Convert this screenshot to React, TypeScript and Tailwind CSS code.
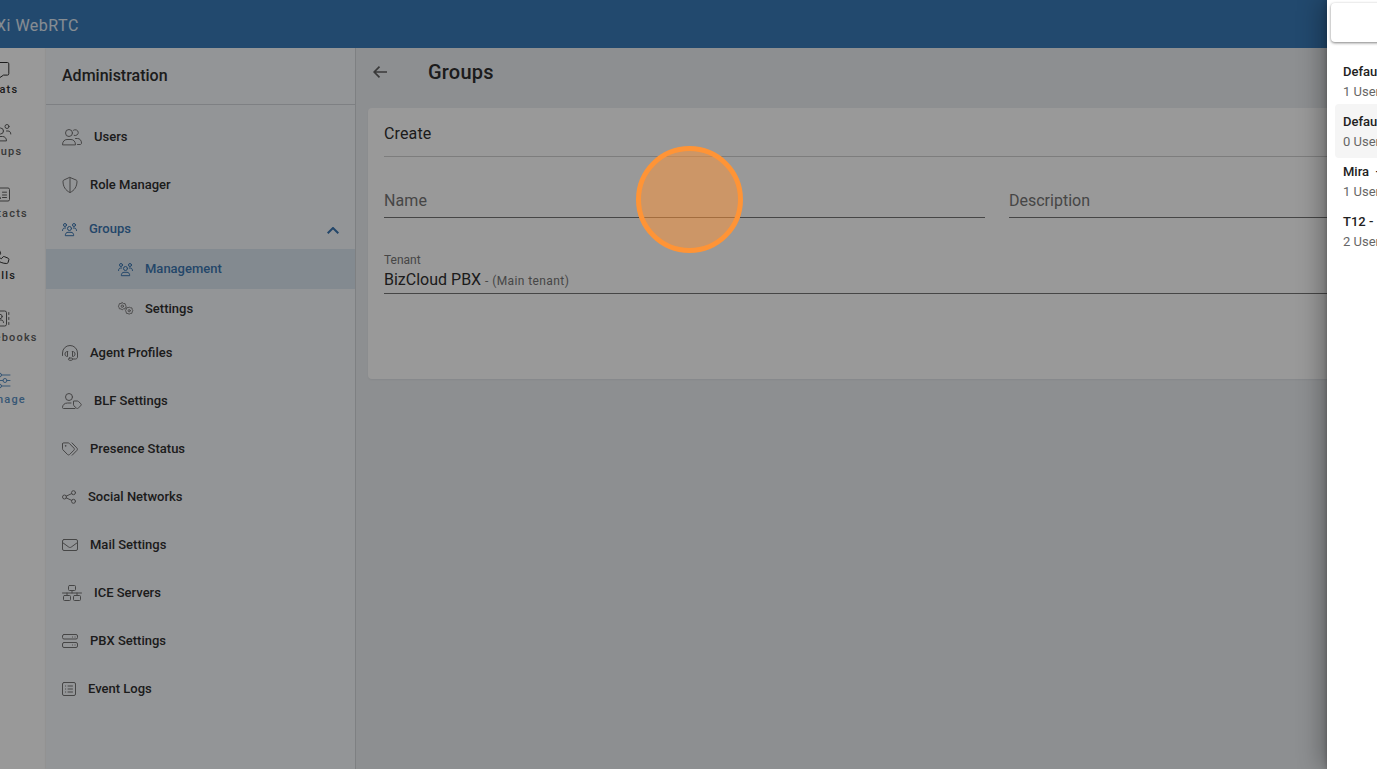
import { ReactNode } from 'react';
import clsx from 'clsx';

type IconProps = { w: number; h: number; children: ReactNode };

function Icon({ w, h, children }: IconProps) {
  return (
    <svg
      width={w}
      height={h}
      viewBox={`0 0 ${w} ${h}`}
      fill="none"
      stroke="currentColor"
      strokeWidth="1"
      strokeLinecap="round"
      strokeLinejoin="round"
      className="shrink-0 overflow-visible"
    >
      {children}
    </svg>
  );
}

const UsersIcon = () => (
  <Icon w={20} h={16}>
    <circle cx="7" cy="4" r="3.5" />
    <path d="M.5 15.5c0-3 2-5 4.500-5h4c2.500 0 4.500 2 4.500 5z" />
    <path d="M11.500 1.200a3 3 0 1 1 .6 5.200M13.500 9.500h2c2.200 0 4 1.800 4 4.500 0 .9-.5 1.500-1.300 1.500h-2.700" />
  </Icon>
);

const ShieldIcon = () => (
  <Icon w={16} h={16}>
    <path d="M8 .5l6.300 2.600c.4.2.7.6.7 1C15 9.500 12.500 13.500 8 15.500 3.500 13.500 1 9.500 1 4.100c0-.4.3-.8.7-1zM8 .5v15" />
  </Icon>
);

const GroupIcon = () => (
  <Icon w={15} h={13}>
    <circle cx="3" cy="2" r="1.500" />
    <circle cx="12" cy="2" r="1.500" />
    <circle cx="7.500" cy="5.500" r="2" />
    <path d="M.5 7.500c0-1.500.9-2.500 2.300-2.500h.9M14.500 7.500c0-1.500-.9-2.500-2.300-2.500h-.9" />
    <path d="M3.300 12.300c0-1.800 1-3 2.700-3h3c1.700 0 2.700 1.200 2.700 3z" />
  </Icon>
);

const GearsIcon = () => (
  <Icon w={15} h={13}>
    <g strokeWidth=".9">
      <path d="M4.200.6l1.200.9 1.700.1.400 1.500.7 1.100-.7 1.200-.4 1.400-1.700.1-1.200.9-1.200-.9-1.600-.1-.4-1.400L.4 4.200l.6-1.100.4-1.500 1.600-.1z" />
      <circle cx="4.300" cy="4.200" r="1.200" />
      <path d="M8.800 5.700l1.300-.1 1.200-.4 1.100.5 1.500.2.300 1.400.6 1.400-.6 1.200-.4 1.500-1.500.1-1.200.7-1.100-.7-1.500-.1-.4-1.500-.6-1.200.7-1.400z" />
      <circle cx="11.200" cy="8.700" r="1.100" />
    </g>
  </Icon>
);

const HeadsetIcon = () => (
  <Icon w={16} h={16}>
    <path d="M.5 10.500V8a7.500 7.500 0 0 1 15 0v4c0 1.100-.9 2-2 2h-3" />
    <path d="M5.500 6.500v5c-1.700 0-2.500-1-2.500-2.500s.8-2.500 2.500-2.500zM10.500 6.500v5c1.700 0 2.500-1 2.500-2.500s-.8-2.500-2.500-2.500z" />
    <rect x="6.500" y="13" width="4" height="2.300" rx="1.100" />
  </Icon>
);

const UserTagIcon = () => (
  <Icon w={20} h={16}>
    <circle cx="7" cy="4" r="3.500" />
    <path d="M9 10H5.500c-3 0-5 2-5 4.500 0 .6.400 1 1 1h11.500" />
    <path d="M11.500 8.500v3.300c0 .4.200.7.400 1l2.400 2.200c.6.600 1.400.6 2 0l2.500-2.300c.6-.6.6-1.400 0-2l-2.400-2.300c-.3-.3-.6-.4-1-.4h-3.400z" />
  </Icon>
);

const TagsIcon = () => (
  <Icon w={16} h={14}>
    <path d="M.5 2v4.800c0 .4.200.8.400 1l4.600 4.700c.6.600 1.500.6 2.100 0l4.300-4.300c.6-.6.6-1.500 0-2.100L7.300 1.400c-.3-.3-.7-.5-1.100-.5H1.500c-.6 0-1 .5-1 1.100z" />
    <path d="M10 .9l4.800 5c.8.800.8 1.800 0 2.600l-4.600 4.700" />
    <circle cx="3.500" cy="3.900" r=".3" />
  </Icon>
);

const ShareIcon = () => (
  <Icon w={14} h={14}>
    <circle cx="2.500" cy="7" r="2" />
    <circle cx="11.500" cy="2.700" r="2" />
    <circle cx="11.500" cy="11.300" r="2" />
    <path d="M4.300 6.100l5.400-2.500M4.300 7.900l5.400 2.500" />
  </Icon>
);

const MailIcon = () => (
  <Icon w={16} h={12}>
    <rect x=".5" y=".5" width="15" height="11" rx="1.500" />
    <path d="M.5 3.500l6.300 4.600c.7.500 1.700.5 2.400 0l6.300-4.600" />
  </Icon>
);

const NetworkIcon = () => (
  <Icon w={20} h={16}>
    <rect x="6.500" y=".5" width="7" height="5" rx="1" />
    <rect x="1.500" y="10.500" width="7" height="5" rx="1" />
    <rect x="11.500" y="10.500" width="7" height="5" rx="1" />
    <path d="M.5 8h19M10 5.500V8M5 8v2.500M15 8v2.500" />
  </Icon>
);

const ServerIcon = () => (
  <Icon w={16} h={14}>
    <rect x=".5" y=".5" width="15" height="4.500" rx="1.500" />
    <rect x=".5" y="8.500" width="15" height="5" rx="1.500" />
    <path d="M10.500 3h.1M13 3h.1M10.500 11h.1M13 11h.1" />
  </Icon>
);

const LogsIcon = () => (
  <Icon w={14} h={14}>
    <rect x=".5" y=".5" width="13" height="13" rx="1.500" />
    <path d="M3.500 4h.2M3.500 7h.2M3.500 10h.2M6 4h4.500M6 7h4.500M6 10h4.500" />
  </Icon>
);

const railItems = [
  {
    label: 'Chats',
    strong: true,
    icon: (
      <Icon w={20} h={20}>
        <path d="M2.500 2.500h15c.8 0 1.300.5 1.300 1.300v10c0 .8-.5 1.300-1.300 1.300h-4l-5 3.400v-3.400h-6c-.8 0-1.300-.5-1.300-1.300v-10c0-.8.5-1.300 1.300-1.300z" />
      </Icon>
    ),
  },
  {
    label: 'Groups',
    icon: (
      <Icon w={20} h={20}>
        <circle cx="17" cy="4.500" r="2" />
        <circle cx="3" cy="4.500" r="2" />
        <circle cx="10.500" cy="9" r="3" />
        <path d="M16.500 9h1.500c1.700 0 2.800 1.100 2.800 3M3.500 9H2C.3 9-.8 10.100-.8 12M4.500 18.500c0-2.500 1.500-4 3.500-4h4.500c2.200 0 4 1.500 4 4z" />
      </Icon>
    ),
  },
  {
    label: 'Contacts',
    icon: (
      <Icon w={20} h={20}>
        <rect x=".5" y="4" width="19" height="13" rx="1.500" />
        <path d="M12.500 8.200h4M12.500 11h4M12.500 13.500h4M3 14.500c0-1.500 1-2.500 2.500-2.500h2.500c1.500 0 2.500 1 2.500 2.500" />
        <circle cx="6.700" cy="8.500" r="2" />
      </Icon>
    ),
  },
  {
    label: 'Calls',
    strong: true,
    icon: (
      <Icon w={20} h={20}>
        <path d="M9 3l1.500 4c.2.500.1 1-.3 1.300L8.500 10c.9 1.500 1.600 2.200 2.800 2.800l1.700-1.900c.4-.4.8-.5 1.300-.3l3.800 1.600c.6.300.9.800.8 1.400l-.8 2.800c-.2.700-.7 1.100-1.400 1.100C9 17.500 2 11.500 1.500 4c0-.7.400-1.200 1.100-1.400l4.900-.5c.7-.1 1.200.2 1.500.9z" />
      </Icon>
    ),
  },
  {
    label: 'Phonebooks',
    icon: (
      <Icon w={20} h={20}>
        <rect x="2" y="3" width="14.500" height="15" rx="1.800" />
        <circle cx="10" cy="8.500" r="2.200" />
        <path d="M6 14.500c0-1.700 1-2.500 2.500-2.500h2.500c1.500 0 2.500.8 2.500 2.500M18.800 4.500v2M18.800 9.500v2M18.800 14.500v2" />
      </Icon>
    ),
  },
  {
    label: 'Manage',
    active: true,
    icon: (
      <Icon w={20} h={20}>
        <path d="M0 5h7.500M11.500 5h8.500M0 10.500h13M17 10.500h3M0 16h7.500M11.500 16H20" />
        <circle cx="9.500" cy="5" r="2" />
        <circle cx="15" cy="10.500" r="2" />
        <circle cx="9.500" cy="16" r="2" />
      </Icon>
    ),
  },
];

const topItems = [
  { label: 'Users', icon: <UsersIcon /> },
  { label: 'Role Manager', icon: <ShieldIcon /> },
];

const bottomItems = [
  { label: 'Agent Profiles', icon: <HeadsetIcon /> },
  { label: 'BLF Settings', icon: <UserTagIcon /> },
  { label: 'Presence Status', icon: <TagsIcon /> },
  { label: 'Social Networks', icon: <ShareIcon /> },
  { label: 'Mail Settings', icon: <MailIcon /> },
  { label: 'ICE Servers', icon: <NetworkIcon /> },
  { label: 'PBX Settings', icon: <ServerIcon /> },
  { label: 'Event Logs', icon: <LogsIcon /> },
];

const tenants = [
  { name: 'Default', users: '1 Users' },
  { name: 'Default', users: '0 Users', selected: true },
  { name: 'Mira  -', users: '1 Users' },
  { name: 'T12 -', users: '2 Users' },
];

function MenuItem({ label, icon }: { label: string; icon: ReactNode }) {
  return (
    <li className="flex h-12 items-center gap-3 px-4">
      <span className="text-[#757575]">{icon}</span>
      {label}
    </li>
  );
}

function Rail() {
  return (
    <nav className="w-[46px] shrink-0 overflow-hidden bg-white">
      <ul className="-ml-[42px] w-[84px]">
        {railItems.map((item) => (
          <li
            key={item.label}
            className={clsx(
              'flex h-[62px] flex-col items-center pt-3 text-[11px] leading-4 font-medium tracking-[1.2px]',
              item.active ? 'text-[#5c91c4]' : item.strong ? 'text-[#303030]' : 'text-[#606060]'
            )}
          >
            {item.icon}
            <span className={clsx('mt-[2px]', item.active ? 'ml-[5px]' : 'ml-[2px]')}>{item.label}</span>
          </li>
        ))}
      </ul>
    </nav>
  );
}

function Sidebar() {
  return (
    <aside className="w-[310px] shrink-0 border-r border-[#d2d5d9] bg-[#f6f8fc] shadow-[0_0_2px_rgba(0,0,0,0.15)]">
      <h1 className="flex h-[57px] items-center border-b border-[#d3d6da] px-4 text-base font-medium text-[#303030]">
        Administration
      </h1>
      <ul className="pt-2 text-[13px] font-medium text-[#303030]">
        {topItems.map((item) => (
          <MenuItem key={item.label} {...item} />
        ))}

        {/* Groups submenu */}
        <li className="pb-px text-[#3b76b0]">
          <div className="flex h-10 items-center gap-3 px-4">
            <GroupIcon />
            <span className="flex-1">Groups</span>
            <svg width="12" height="7" viewBox="0 0 12 7" fill="none" stroke="currentColor" strokeWidth="2" className="mt-[2px]">
              <path d="M.7 6.300L6 1l5.300 5.300" />
            </svg>
          </div>
          <ul>
            <li className="flex h-10 items-center gap-3 bg-[#dbe7f1] pl-[72px]">
              <GroupIcon />
              Management
            </li>
            <li className="flex h-[39px] items-center gap-3 pl-[72px] text-[#303030]">
              <span className="text-[#757575]">
                <GearsIcon />
              </span>
              Settings
            </li>
          </ul>
        </li>

        {bottomItems.map((item) => (
          <MenuItem key={item.label} {...item} />
        ))}
      </ul>
    </aside>
  );
}

function GroupForm() {
  return (
    <main className="min-w-0 flex-1 bg-[#ebeef2] pl-3">
      <header className="flex h-[60px] items-center pb-3 text-[#303030]">
        <svg width="14" height="12" viewBox="0 0 14 12" fill="none" stroke="#606060" strokeWidth="1.700" className="ml-[5px]">
          <path d="M14 6H1.500M6.500.7L1.200 6l5.300 5.300" />
        </svg>
        <h2 className="ml-[41px] text-xl font-medium tracking-[0.2px]">Groups</h2>
      </header>

      <section className="h-[271px] rounded-l bg-white px-4 shadow-[0_1px_2px_rgba(0,0,0,0.05)]">
        <h3 className="flex h-[49px] items-center border-b border-[#d0d0d0] pt-1 text-base tracking-[0.15px] text-[#303030]">
          Create
        </h3>
        <div className="mt-[17px] flex gap-6 text-base text-[#757575]">
          <div className="flex h-11 w-[601px] items-end border-b border-[#757575] pb-1 tracking-[0.1px]">Name</div>
          <div className="flex h-11 flex-1 items-end border-b border-[#757575] pb-1">Description</div>
        </div>
        <div className="mt-[34px] flex h-[42px] flex-col border-b border-[#757575]">
          <label className="text-xs leading-4 text-[#757575]">Tenant</label>
          <p className="text-base leading-6 text-[#303030]">
            BizCloud PBX <span className="text-xs tracking-[0.4px] text-[#757575]">- (Main tenant)</span>
          </p>
        </div>
      </section>
    </main>
  );
}

function TenantDrawer() {
  return (
    <aside className="absolute inset-y-0 right-0 w-[50px] bg-white shadow-[-6px_0_24px_rgba(0,0,0,0.3),0_0_5px_rgba(0,0,0,0.25)]">
      <div className="h-full overflow-hidden pt-[3px] pl-1">
        <div className="h-[39px] w-16 rounded bg-white shadow-[0_1px_3px_rgba(0,0,0,0.5)]" />
        <ul className="mt-[12px] pl-1 text-[13px] whitespace-pre">
          {tenants.map((tenant, i) => (
            <li
              key={i}
              className={clsx(
                '-mb-1 h-[54px] w-16 rounded pt-2 pl-2 leading-5',
                tenant.selected && 'bg-[#f5f5f5]'
              )}
            >
              <p className="font-medium text-[#212121]">{tenant.name}</p>
              <p className="text-[#666]">{tenant.users}</p>
            </li>
          ))}
        </ul>
      </div>
    </aside>
  );
}

export default function App() {
  return (
    <div className="relative flex h-screen flex-col overflow-hidden font-[Roboto,sans-serif]">
      <header className="relative flex h-12 shrink-0 items-center bg-[#397ab8] text-base tracking-[0.5px] text-white/85">
        <span className="-ml-1 pt-[3px]">Xi WebRTC</span>
      </header>
      <div className="flex min-h-0 flex-1">
        <Rail />
        <Sidebar />
        <GroupForm />
      </div>

      {/* Backdrop */}
      <div className="absolute inset-0 bg-black/40" />
      <TenantDrawer />

      {/* Click marker */}
      <div className="absolute top-[146px] left-[636px] size-[107px] rounded-full border-5 border-[#ff9436] bg-[#ff9436]/50" />
    </div>
  );
}
